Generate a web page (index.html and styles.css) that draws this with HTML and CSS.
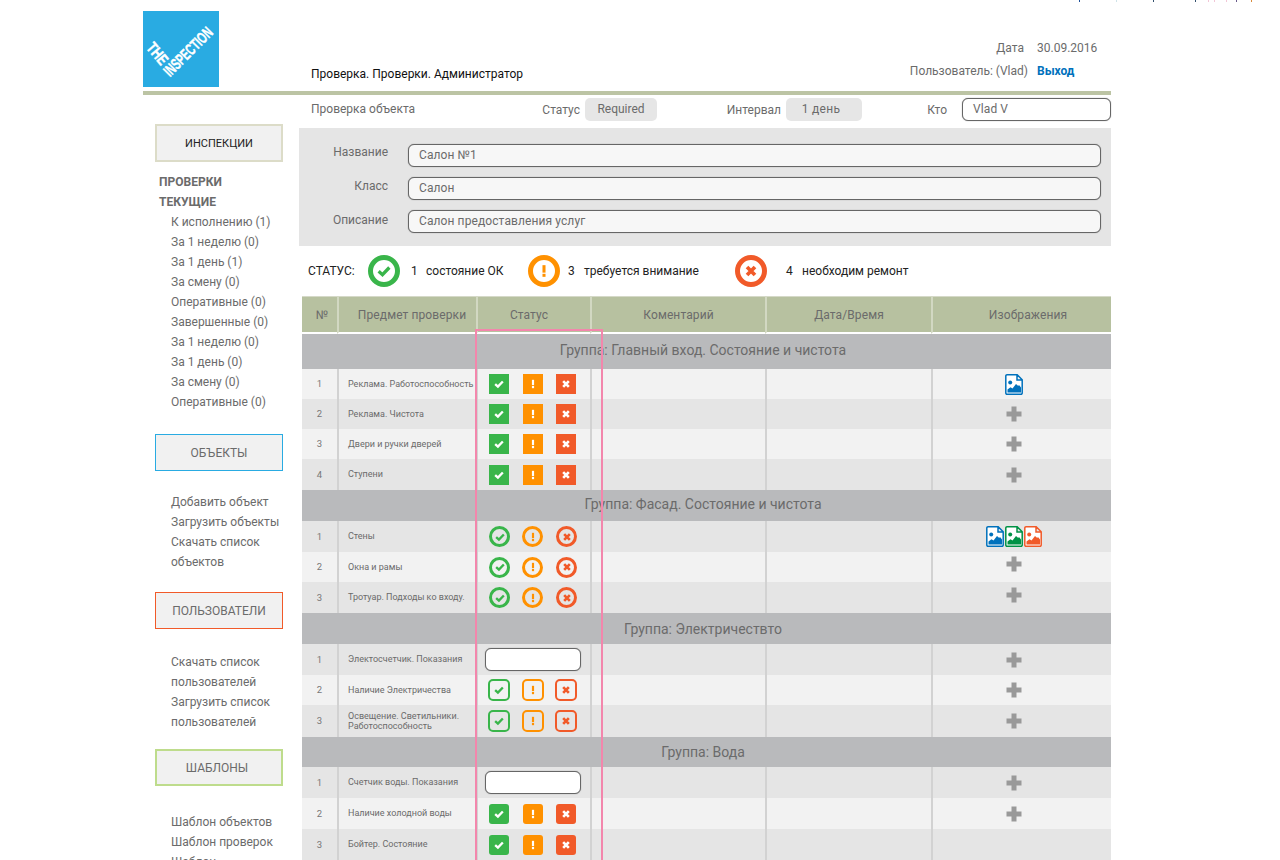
FILE: index.html
```html
<!DOCTYPE html>
<html lang="ru">
<head>
    <meta charset="UTF-8">
    <meta name="viewport" content="width=device-width, initial-scale=1.0">
    <title>Проверка объекта</title>
    <link rel="stylesheet" href="styles.css">
</head>
<body>
    <svg class="sprite" width="0" height="0">
        <symbol id="i-check" viewBox="0 0 12 12"><polyline points="1.4,6.2 4.7,9.2 10.6,3" fill="none" stroke="currentColor" stroke-width="2.800"/></symbol>
        <symbol id="i-bang" viewBox="0 0 12 12"><rect x="4.700" y="1" width="2.600" height="6.400" fill="currentColor"/><rect x="4.700" y="8.400" width="2.600" height="2.600" fill="currentColor"/></symbol>
        <symbol id="i-cross" viewBox="0 0 12 12"><path d="M2.600 2.600 9.400 9.400M9.400 2.600 2.600 9.400" fill="none" stroke="currentColor" stroke-width="3.200"/></symbol>
        <symbol id="i-plus" viewBox="0 0 16 16"><path d="M5.500.500h5v5h5v5h-5v5h-5v-5h-5v-5h5z" fill="currentColor"/></symbol>
        <symbol id="i-image" viewBox="0 0 18 21">
            <path d="M2 .8h10.200l5 5V19a1.200 1.200 0 0 1-1.200 1.200H2A1.200 1.200 0 0 1 .8 19V2A1.200 1.200 0 0 1 2 .8zM12 .8v5.200h5.200" fill="#fff" stroke="currentColor" stroke-width="1.500"/>
            <circle cx="5.200" cy="8.600" r="2" fill="currentColor"/>
            <path d="M2.500 18.500v-3l3-2.200 2 1.300 3.500-4.600 2 1.800 1.200-.6 1.800 2.300v5.000z" fill="currentColor"/>
        </symbol>
    </svg>

    <div class="page-edge"></div>

    <div class="page">
        <header class="header">
            <div class="logo">
                <svg viewBox="0 0 76 76" width="76" height="76">
                    <text class="logo-text" transform="translate(2.500 37) rotate(50)" textLength="24" lengthAdjust="spacingAndGlyphs">THE</text>
                    <text class="logo-text" transform="translate(27 66.500) rotate(-45)" textLength="62" lengthAdjust="spacingAndGlyphs">INSPECTION</text>
                </svg>
            </div>
            <div class="title">Проверка. Проверки. Администратор</div>
            <div class="user-box">
                <span class="user-label user-date">Дата</span>
                <span>30.09.2016</span>
                <span class="user-label">Пользователь: (Vlad)</span>
                <a class="logout" href="#">Выход</a>
            </div>
        </header>

        <div class="layout">
            <aside class="sidebar">
                <div class="side-btn side-btn-main">ИНСПЕКЦИИ</div>
                <ul class="side-nav nav-main">
                    <li class="nav-title">ПРОВЕРКИ</li>
                    <li class="nav-title">ТЕКУЩИЕ</li>
                    <li>К исполнению (1)</li>
                    <li>За 1 неделю (0)</li>
                    <li>За 1 день (1)</li>
                    <li>За смену (0)</li>
                    <li>Оперативные (0)</li>
                    <li>Завершенные (0)</li>
                    <li>За 1 неделю (0)</li>
                    <li>За 1 день (0)</li>
                    <li>За смену (0)</li>
                    <li>Оперативные (0)</li>
                </ul>

                <div class="side-btn side-btn-objects">ОБЪЕКТЫ</div>
                <ul class="side-nav">
                    <li>Добавить объект</li>
                    <li>Загрузить объекты</li>
                    <li>Скачать список объектов</li>
                </ul>

                <div class="side-btn side-btn-users">ПОЛЬЗОВАТЕЛИ</div>
                <ul class="side-nav nav-users">
                    <li>Скачать список пользователей</li>
                    <li>Загрузить список пользователей</li>
                </ul>

                <div class="side-btn side-btn-templates">ШАБЛОНЫ</div>
                <ul class="side-nav nav-templates">
                    <li>Шаблон объектов</li>
                    <li>Шаблон проверок</li>
                    <li>Шаблон</li>
                </ul>
            </aside>

            <main class="main">
                <div class="topbar">
                    <div class="topbar-title">Проверка объекта</div>
                    <div class="field"><span>Статус</span><span class="pill pill-status">Required</span></div>
                    <div class="field"><span>Интервал</span><span class="pill pill-interval">1 день</span></div>
                    <div class="field field-who"><span>Кто</span><span class="input input-who">Vlad V</span></div>
                </div>

                <div class="object-form">
                    <label>Название</label><span class="input">Салон №1</span>
                    <label>Класс</label><span class="input">Салон</span>
                    <label>Описание</label><span class="input">Салон предоставления услуг</span>
                </div>

                <div class="legend">
                    <div class="legend-label">СТАТУС:</div>
                    <div class="legend-item legend-ok">
                        <span class="mark ring big ok"><svg><use href="#i-check"/></svg></span>
                        <span class="legend-num">1</span><span>состояние ОК</span>
                    </div>
                    <div class="legend-item legend-warn">
                        <span class="mark ring big warn"><svg><use href="#i-bang"/></svg></span>
                        <span class="legend-num">3</span><span>требуется внимание</span>
                    </div>
                    <div class="legend-item legend-bad">
                        <span class="mark ring big bad"><svg><use href="#i-cross"/></svg></span>
                        <span class="legend-num">4</span><span>необходим ремонт</span>
                    </div>
                </div>

                <div class="table-wrap">
                    <table class="checks">
                        <colgroup>
                            <col class="col-num"><col class="col-subject"><col class="col-status">
                            <col class="col-comment"><col class="col-date"><col class="col-images">
                        </colgroup>
                        <thead>
                            <tr>
                                <th class="th-num">№</th><th class="th-subject">Предмет проверки</th><th class="th-status">Статус</th>
                                <th>Коментарий</th><th>Дата/Время</th><th class="th-images">Изображения</th>
                            </tr>
                        </thead>
                        <tbody>
                            <tr class="group group-high h35"><td colspan="6">Группа: Главный вход. Состояние и чистота</td></tr>
                            <tr class="light h30">
                                <td class="num">1</td><td class="subject">Реклама. Работоспособность</td>
                                <td><div class="marks"><span class="mark solid ok"><svg><use href="#i-check"/></svg></span><span class="mark solid warn"><svg><use href="#i-bang"/></svg></span><span class="mark solid bad"><svg><use href="#i-cross"/></svg></span></div></td>
                                <td></td><td></td>
                                <td class="images"><svg class="file blue"><use href="#i-image"/></svg></td>
                            </tr>
                            <tr class="dark h30">
                                <td class="num">2</td><td class="subject">Реклама. Чистота</td>
                                <td><div class="marks"><span class="mark solid ok"><svg><use href="#i-check"/></svg></span><span class="mark solid warn"><svg><use href="#i-bang"/></svg></span><span class="mark solid bad"><svg><use href="#i-cross"/></svg></span></div></td>
                                <td></td><td></td>
                                <td class="images"><svg class="plus"><use href="#i-plus"/></svg></td>
                            </tr>
                            <tr class="light h30">
                                <td class="num">3</td><td class="subject">Двери и ручки дверей</td>
                                <td><div class="marks"><span class="mark solid ok"><svg><use href="#i-check"/></svg></span><span class="mark solid warn"><svg><use href="#i-bang"/></svg></span><span class="mark solid bad"><svg><use href="#i-cross"/></svg></span></div></td>
                                <td></td><td></td>
                                <td class="images"><svg class="plus"><use href="#i-plus"/></svg></td>
                            </tr>
                            <tr class="dark h31">
                                <td class="num">4</td><td class="subject">Ступени</td>
                                <td><div class="marks"><span class="mark solid ok"><svg><use href="#i-check"/></svg></span><span class="mark solid warn"><svg><use href="#i-bang"/></svg></span><span class="mark solid bad"><svg><use href="#i-cross"/></svg></span></div></td>
                                <td></td><td></td>
                                <td class="images"><svg class="plus"><use href="#i-plus"/></svg></td>
                            </tr>

                            <tr class="group group-high h31"><td colspan="6">Группа: Фасад. Состояние и чистота</td></tr>
                            <tr class="dark h31">
                                <td class="num">1</td><td class="subject">Стены</td>
                                <td><div class="marks"><span class="mark ring ok"><svg><use href="#i-check"/></svg></span><span class="mark ring warn"><svg><use href="#i-bang"/></svg></span><span class="mark ring bad"><svg><use href="#i-cross"/></svg></span></div></td>
                                <td></td><td></td>
                                <td class="images"><svg class="file blue"><use href="#i-image"/></svg><svg class="file green"><use href="#i-image"/></svg><svg class="file orange"><use href="#i-image"/></svg></td>
                            </tr>
                            <tr class="light h30">
                                <td class="num">2</td><td class="subject">Окна и рамы</td>
                                <td><div class="marks"><span class="mark ring ok"><svg><use href="#i-check"/></svg></span><span class="mark ring warn"><svg><use href="#i-bang"/></svg></span><span class="mark ring bad"><svg><use href="#i-cross"/></svg></span></div></td>
                                <td></td><td></td>
                                <td class="images"><svg class="plus lift"><use href="#i-plus"/></svg></td>
                            </tr>
                            <tr class="dark h31">
                                <td class="num">3</td><td class="subject">Тротуар. Подходы ко входу.</td>
                                <td><div class="marks"><span class="mark ring ok"><svg><use href="#i-check"/></svg></span><span class="mark ring warn"><svg><use href="#i-bang"/></svg></span><span class="mark ring bad"><svg><use href="#i-cross"/></svg></span></div></td>
                                <td></td><td></td>
                                <td class="images"><svg class="plus lift"><use href="#i-plus"/></svg></td>
                            </tr>

                            <tr class="group h31"><td colspan="6">Группа: Электричествто</td></tr>
                            <tr class="dark h31">
                                <td class="num">1</td><td class="subject">Электосчетчик. Показания</td>
                                <td><span class="reading"></span></td>
                                <td></td><td></td>
                                <td class="images"><svg class="plus"><use href="#i-plus"/></svg></td>
                            </tr>
                            <tr class="light h30">
                                <td class="num">2</td><td class="subject">Наличие Электричества</td>
                                <td><div class="marks"><span class="mark box ok"><svg><use href="#i-check"/></svg></span><span class="mark box warn"><svg><use href="#i-bang"/></svg></span><span class="mark box bad"><svg><use href="#i-cross"/></svg></span></div></td>
                                <td></td><td></td>
                                <td class="images"><svg class="plus"><use href="#i-plus"/></svg></td>
                            </tr>
                            <tr class="dark h32">
                                <td class="num">3</td><td class="subject two-lines">Освещение. Светильники.<br>Работоспособность</td>
                                <td><div class="marks"><span class="mark box ok"><svg><use href="#i-check"/></svg></span><span class="mark box warn"><svg><use href="#i-bang"/></svg></span><span class="mark box bad"><svg><use href="#i-cross"/></svg></span></div></td>
                                <td></td><td></td>
                                <td class="images"><svg class="plus"><use href="#i-plus"/></svg></td>
                            </tr>

                            <tr class="group h30"><td colspan="6">Группа: Вода</td></tr>
                            <tr class="dark h31">
                                <td class="num">1</td><td class="subject">Счетчик воды. Показания</td>
                                <td><span class="reading"></span></td>
                                <td></td><td></td>
                                <td class="images"><svg class="plus"><use href="#i-plus"/></svg></td>
                            </tr>
                            <tr class="light h31">
                                <td class="num">2</td><td class="subject">Наличие холодной воды</td>
                                <td><div class="marks"><span class="mark solid round ok"><svg><use href="#i-check"/></svg></span><span class="mark solid round warn"><svg><use href="#i-bang"/></svg></span><span class="mark solid round bad"><svg><use href="#i-cross"/></svg></span></div></td>
                                <td></td><td></td>
                                <td class="images"><svg class="plus"><use href="#i-plus"/></svg></td>
                            </tr>
                            <tr class="dark h31">
                                <td class="num">3</td><td class="subject">Бойтер. Состояние</td>
                                <td><div class="marks"><span class="mark solid round ok"><svg><use href="#i-check"/></svg></span><span class="mark solid round warn"><svg><use href="#i-bang"/></svg></span><span class="mark solid round bad"><svg><use href="#i-cross"/></svg></span></div></td>
                                <td></td><td></td>
                                <td class="images"></td>
                            </tr>
                        </tbody>
                    </table>
                    <div class="highlight"></div>
                </div>
            </main>
        </div>
    </div>
</body>
</html>
```

FILE: styles.css
```css
html, body {
    height: 100%;
    overflow: hidden;
}
body {
    margin: 0;
    font-family: Roboto, "Noto Sans", sans-serif;
    font-size: 12px;
    color: #6b6b6b;
    background: #fff;
}
.sprite {
    position: absolute;
}
/* cut-off marks along the very top of the page */
.page-edge {
    position: absolute;
    top: 0;
    left: 1079px;
    width: 1px;
    height: 2px;
    background: #1d4f9a;
    box-shadow: 37px 0 #cfe3e8, 74px 0 #33506e, 116px 0 #33506e, 129px 0 #f2c6d6, 135px 0 #f2c6d6, 147px 0 #f2c6d6, 157px 0 #6a5a8a, 172px 0 #d98a3a;
}

.page {
    width: 968px;
    margin-left: 143px;
}

/* header */
.header {
    display: flex;
    height: 91px;
    border-bottom: 4px solid #bcc4a4;
}
.logo {
    width: 76px;
    height: 76px;
    margin-top: 11px;
    background: #29abe2;
}
.logo-text {
    font-family: "Liberation Sans", sans-serif;
    font-weight: bold;
    font-size: 16px;
    fill: #fff;
    stroke: #fff;
    stroke-width: .4px;
}
.title {
    align-self: flex-end;
    margin-left: 92px;
    padding-bottom: 10px;
    font-size: 12px;
    color: #111;
}
.user-box {
    display: grid;
    grid-template-columns: auto 74px;
    column-gap: 9px;
    row-gap: 9px;
    align-self: flex-start;
    margin-left: auto;
    margin-top: 41px;
    line-height: 14px;
}
.user-label {
    text-align: right;
}
.user-date {
    padding-right: 4px;
}
.logout {
    color: #0071bc;
    font-weight: bold;
    text-decoration: none;
}

.layout {
    display: flex;
}

/* sidebar */
.sidebar {
    width: 156px;
    flex: none;
    padding-left: 12px;
    box-sizing: border-box;
}
.side-btn {
    display: flex;
    align-items: center;
    justify-content: center;
    box-sizing: border-box;
    width: 128px;
    height: 37px;
    background: #f1f1f1;
    border: 1px solid #ccc;
    font-size: 12px;
    color: #6b6b6b;
}
.side-btn-main {
    height: 38px;
    margin-top: 29px;
    border: 2px solid #dcdcc8;
    font-size: 11px;
    color: #222;
}
.side-btn-objects {
    margin-top: 22px;
    border-color: #29abe2;
}
.side-btn-users {
    margin-top: 20px;
    border-color: #f15a29;
}
.side-btn-templates {
    margin-top: 17px;
    padding-right: 4px;
    border: 2px solid #bedc8c;
}
.side-nav {
    list-style: none;
    margin: 21px 0 0;
    padding: 0 0 0 16px;
    font-size: 12px;
    line-height: 20px;
}
.nav-main {
    margin-top: 10px;
    padding-left: 4px;
}
.nav-main li {
    padding-left: 12px;
}
.nav-main .nav-title {
    padding-left: 0;
    font-weight: bold;
}
.nav-users {
    margin-top: 23px;
}
.nav-templates {
    margin-top: 26px;
}

/* main column */
.main {
    flex: 1;
    min-width: 0;
}
.topbar {
    display: grid;
    grid-template-columns: 241px 117px 205px 249px;
    align-items: start;
    height: 33px;
    box-sizing: border-box;
    padding-top: 3px;
}
.topbar-title {
    padding-left: 12px;
    line-height: 23px;
}
.field {
    display: flex;
    justify-content: flex-end;
    align-items: center;
    gap: 5px;
}
.field-who {
    gap: 15px;
}
.pill {
    height: 23px;
    line-height: 23px;
    text-align: center;
    background: #e6e6e6;
    border-radius: 5px;
}
.pill-status {
    width: 72px;
}
.pill-interval {
    box-sizing: border-box;
    width: 76px;
    padding-right: 6px;
    letter-spacing: .3px;
}
.input {
    display: block;
    box-sizing: border-box;
    height: 23px;
    line-height: 21px;
    padding-left: 10px;
    letter-spacing: .1px;
    background: #f7f7f7;
    border: 1px solid #666;
    border-radius: 6px;
    box-shadow: 0 0 1px #777;
}
.input-who {
    width: 149px;
    background: #fff;
}

.object-form {
    display: grid;
    grid-template-columns: 89px 693px;
    align-content: start;
    column-gap: 20px;
    row-gap: 10px;
    height: 118px;
    box-sizing: border-box;
    padding-top: 16px;
    background: #e5e5e5;
}
.object-form label {
    margin-top: 1px;
    text-align: right;
}
.object-form label:nth-of-type(2) {
    margin-top: 2px;
}
.object-form label:nth-of-type(3) {
    margin-top: 3px;
}

.legend {
    display: flex;
    align-items: center;
    height: 50px;
    padding-left: 9px;
    color: #222;
    font-size: 12px;
}
.legend-label {
    width: 60px;
}
.legend-item {
    display: flex;
    align-items: center;
}
.legend-ok {
    width: 160px;
}
.legend-warn {
    width: 207px;
}
.legend-num {
    width: 15px;
    margin-left: 11px;
}
.legend-warn .legend-num {
    width: 16px;
    margin-left: 8px;
}
.legend-bad .legend-num {
    width: 16px;
    margin-left: 19px;
}

/* status marks */
.marks {
    display: flex;
    gap: 14px;
    padding-left: 11px;
}
.mark {
    display: flex;
    align-items: center;
    justify-content: center;
    flex: none;
    box-sizing: border-box;
    width: 20px;
    height: 20px;
}
.mark:last-child {
    margin-left: -1px;
}
.mark svg {
    width: 10px;
    height: 10px;
}
.ok { color: #39b54a; }
.warn { color: #ff9100; }
.bad { color: #f15a29; }
.solid {
    color: #fff;
}
.solid.ok { background: #39b54a; }
.solid.warn { background: #ff9100; }
.solid.bad { background: #f15a29; }
.round {
    border-radius: 3px;
}
.ring {
    width: 21px;
    height: 21px;
    border: 3px solid currentColor;
    border-radius: 50%;
}
.ring:nth-child(2) {
    margin-left: -2px;
}
.ring.big {
    width: 32px;
    height: 32px;
    border-width: 5px;
}
.ring.big svg {
    width: 14px;
    height: 14px;
}
.box {
    width: 22px;
    height: 22px;
    margin-left: -1px;
    border: 2px solid currentColor;
    border-radius: 5px;
}
.box:nth-child(2) {
    margin-left: -2px;
}
.box:last-child {
    margin-left: -3px;
}

/* checks table */
.table-wrap {
    position: relative;
    margin-left: 3px;
}
.checks {
    width: 809px;
    table-layout: fixed;
    border-collapse: separate;
    border-spacing: 0;
}
.col-num { width: 35px; }
.col-subject { width: 139px; }
.col-status { width: 114px; }
.col-comment { width: 175px; }
.col-date { width: 166px; }
.col-images { width: 180px; }
.checks th {
    height: 35px;
    padding: 0;
    box-sizing: content-box;
    background: #b7c1a0;
    border-top: 1px solid #d5d9c8;
    border-bottom: 2px solid #fff;
    border-left: 2px solid #d2d8c2;
    font-weight: normal;
    font-size: 12px;
    letter-spacing: .1px;
    color: #6b6b6b;
}
.checks th:first-child {
    border-left: 0;
}
.checks .th-num { padding-left: 5px; }
.checks .th-subject { padding-left: 9px; }
.checks .th-status { padding-right: 10px; }
.checks .th-images { padding-left: 12px; }
.checks td {
    padding: 0;
    border-left: 2px solid #d2d2d2;
}
.checks td:first-child {
    border-left: 0;
}
.h30 { height: 30px; }
.h31 { height: 31px; }
.h32 { height: 32px; }
.h35 { height: 35px; }
.light td { background: #f2f2f2; }
.dark td { background: #e5e5e5; }
.checks .group td {
    padding-right: 7px;
    text-align: center;
    font-size: 14px;
    background: #b9babc;
}
.checks .group-high td {
    padding-bottom: 3px;
}
.checks .num {
    padding-bottom: 1px;
    text-align: center;
    font-size: 9.500px;
    color: #777;
}
.checks .subject {
    padding: 0 0 1px 9px;
    font-size: 9px;
    white-space: nowrap;
}
.two-lines {
    line-height: 10px;
}
.reading {
    display: block;
    box-sizing: border-box;
    width: 96px;
    height: 23px;
    margin-left: 7px;
    background: #fff;
    border: 1px solid #666;
    border-radius: 6px;
    box-shadow: 0 0 1px #777;
}
.checks .images {
    padding-right: 16px;
    text-align: center;
    font-size: 0;
}
.file {
    width: 18px;
    height: 21px;
    margin: 0 .5px;
    vertical-align: middle;
}
.blue { color: #0071bc; }
.green { color: #009245; }
.orange { color: #f15a29; }
.plus {
    width: 16px;
    height: 16px;
    color: #999;
    vertical-align: middle;
}
.lift {
    margin-bottom: 6px;
}

/* pink selection frame over the status column */
.highlight {
    position: absolute;
    top: 33px;
    left: 173px;
    width: 124px;
    height: 560px;
    border: 2px solid #f386ac;
    pointer-events: none;
}
```
